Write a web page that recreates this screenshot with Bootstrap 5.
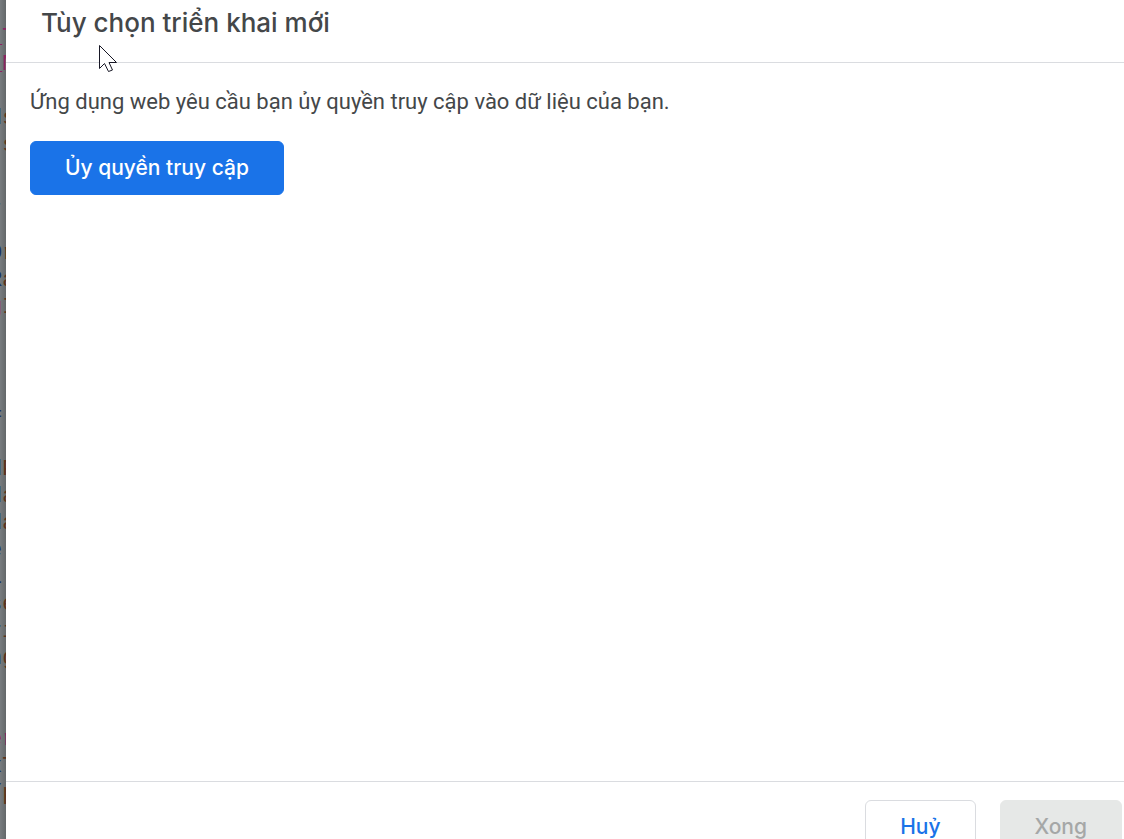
<!DOCTYPE html>
<html lang="vi">
<head>
<meta charset="utf-8">
<meta name="viewport" content="width=device-width, initial-scale=1">
<title>Tùy chọn triển khai mới</title>
<link href="https://cdn.jsdelivr.net/npm/bootstrap@5.3.0/dist/css/bootstrap.min.css" rel="stylesheet">
<style>
body { font-family: Roboto, "Noto Sans", sans-serif; color: #444749; font-size: 22px; line-height: 30px; }
.code-edge { width: 6px; background: linear-gradient(to right, #787c7f, #64686a); }
.code-edge pre { width: 28px; margin: -3px 0 0 -11px; font: 22px/27px "Liberation Mono", monospace; color: #5c341c; overflow: visible; }
.code-edge b { font-weight: 400; color: #1c3262; }
.code-edge i { font-style: normal; color: #8c2462; }
.dialog-head { height: 63px; padding: 7px 35px 0; border-bottom: 1px solid #dadce0; }
.dialog-head h1 { font-family: Inter, Roboto, sans-serif; font-size: 26px; line-height: 32px; font-weight: 500; }
.dialog-main { padding: 24px; }
.dialog-foot { height: 58px; padding: 18px 2px 0; border-top: 1px solid #dadce0; gap: 24px; }
.action { height: 54px; padding: 0 34px; border-radius: 6px; font-family: Inter, Roboto, sans-serif; font-size: 21px; line-height: 30px; font-weight: 500; }
.action-primary { background: #1a73e8; border-color: #1a73e8; color: #fff; }
.action-plain { background: #fff; border-color: #dadce0; color: #1a73e8; }
.action-off:disabled { background: #e6e8e7; border-color: #e6e8e7; color: #a5a7a7; opacity: 1; }
.pointer { left: 98px; top: 44px; }
</style>
</head>
<body>
<div class="d-flex vh-100 overflow-hidden position-relative">
<aside class="code-edge flex-shrink-0 overflow-hidden" aria-hidden="true"><pre>

<i>_T</i>
<i>_M</i>

<b>d</b>s
 s

<b>t</b>

<b>O</b>r
<b>R</b>a
<i>g</i>I



<b>=</b>

<b>d</b>P
<b>d</b>a
<b>d</b>a
<b>e</b>
<b>L</b>
<b>s</b>e
<b>r</b>i
<b>n</b>g


<i>er</i>
<b>x</b>T
<b>/</b>p
</pre></aside>
<section class="d-flex flex-column flex-grow-1 bg-white" role="dialog" aria-labelledby="dialog-title">
<header class="dialog-head"><h1 id="dialog-title" class="m-0">Tùy chọn triển khai mới</h1></header>
<main class="dialog-main flex-grow-1">
<p class="mb-4">Ứng dụng web yêu cầu bạn ủy quyền truy cập vào dữ liệu của bạn.</p>
<button type="button" class="btn action action-primary">Ủy quyền truy cập</button>
</main>
<footer class="dialog-foot d-flex justify-content-end">
<button type="button" class="btn action action-plain">Huỷ</button>
<button type="button" class="btn action action-off" disabled>Xong</button>
</footer>
</section>
<svg class="pointer position-absolute pe-none" width="20" height="30" viewBox="0 0 20 30" aria-hidden="true"><path d="M1.500 1.500V24.500L6.500 19.500L10.500 27.500L14.500 26L11 18.500H18.500Z" fill="#fff" stroke="#171725"/></svg>
</div>
<script src="https://cdn.jsdelivr.net/npm/bootstrap@5.3.0/dist/js/bootstrap.bundle.min.js"></script>
</body>
</html>
